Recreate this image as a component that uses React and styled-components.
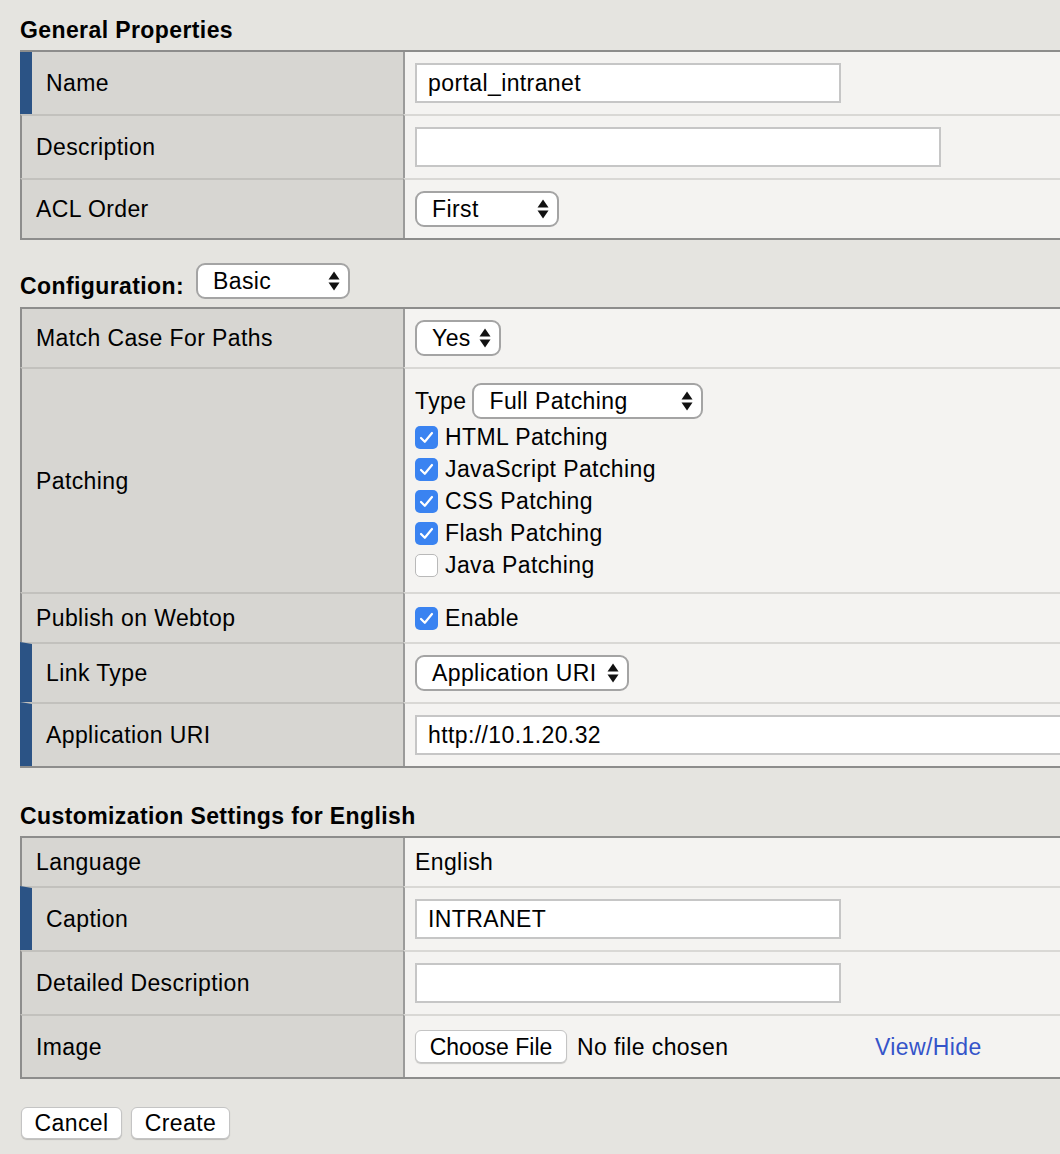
import React from 'react';
import styled, { createGlobalStyle } from 'styled-components';

const GlobalStyle = createGlobalStyle`
    html, body {
        margin: 0;
        padding: 0;
        background: #e5e4e0;
        overflow: hidden;
    }
    body {
        font-family: "Liberation Sans", Arial, Helvetica, sans-serif;
        font-size: 23px;
        letter-spacing: 0.4px;
        color: #000000;
    }
`

const Page = styled.div`
    width: 1060px;
    height: 1154px;
    overflow: hidden;
    box-sizing: border-box;
    padding: 17px 0 0 20px;
`
const SectionTitle = styled.h3`
    margin: ${({ $first }) => ($first ? '0' : '35px')} 0 7px;
    font-size: 23px;
    line-height: 26px;
    font-weight: bold;
`
const ConfigHeader = styled.div`
    display: flex;
    align-items: flex-end;
    gap: 12px;
    margin: 23px 0 8px;

    h3 {
        margin: 0;
        font-size: 23px;
        line-height: 26px;
        font-weight: bold;
    }
`
const Table = styled.div`
    width: 1100px;
    border-top: 2px solid #8d8d8c;
    border-bottom: 2px solid #8d8d8c;
`
const Row = styled.div`
    display: grid;
    grid-template-columns: 383px 1fr;

    & + & > div:first-child {
        border-top: 2px solid #c2c1bd;
    }
    & + & > div:last-child {
        border-top: 2px solid #d9d8d5;
    }
`
const Label = styled.div`
    box-sizing: border-box;
    display: flex;
    align-items: center;
    padding-left: 14px;
    background: #d7d6d2;
    border-left: ${({ $required }) => ($required ? '12px solid #2b5385' : '2px solid #8d8d8c')};
    line-height: 26px;
`
const Value = styled.div`
    box-sizing: border-box;
    padding: 11px 10px;
    background: #f4f3f1;
    border-left: 2px solid #9b9b9a;
    line-height: 26px;
    min-width: 0;
`
const TextInput = styled.input`
    display: block;
    box-sizing: border-box;
    width: ${({ $w }) => $w}px;
    height: 40px;
    margin: 0;
    padding: 0 11px;
    background: #ffffff;
    border: 2px solid #c6c6c6;
    border-radius: 0;
    font: inherit;
    letter-spacing: inherit;
    color: #000000;
    outline: none;
`
const SelectBox = styled.div`
    display: inline-flex;
    align-items: center;
    justify-content: space-between;
    box-sizing: border-box;
    width: ${({ $w }) => $w}px;
    height: 36px;
    padding: 0 8px 0 15px;
    background: #ffffff;
    border: 2px solid #a4a4a4;
    border-radius: 9px;
    vertical-align: middle;

    svg {
        flex-shrink: 0;
    }
`
const Line = styled.div`
    display: flex;
    align-items: center;
    height: ${({ $h }) => $h}px;
    gap: ${({ $gap }) => $gap ?? 7}px;
`
const Box = styled.span`
    display: inline-flex;
    align-items: center;
    justify-content: center;
    box-sizing: border-box;
    width: 23px;
    height: 23px;
    border-radius: 5px;
    background: ${({ $checked }) => ($checked ? '#3a83f1' : '#ffffff')};
    border: ${({ $checked }) => ($checked ? 'none' : '1px solid #b9b9b9')};
`
const PushButton = styled.button`
    box-sizing: border-box;
    width: ${({ $w }) => $w}px;
    height: ${({ $h }) => $h || 32}px;
    padding: 0;
    background: #ffffff;
    border: 1px solid #c4c4c4;
    border-radius: 6px;
    box-shadow: 0 1px 1px rgba(0, 0, 0, 0.18);
    font: inherit;
    letter-spacing: ${({ $tight }) => ($tight ? '0' : 'inherit')};
    color: #000000;
`
const FileField = styled.div`
    display: flex;
    align-items: center;
    gap: 10px;
    width: 460px;
`
const LinkText = styled.a`
    color: #3454c9;
    text-decoration: none;
`
const Actions = styled.div`
    display: flex;
    gap: 9px;
    margin-top: 28px;
    padding-left: 1px;
`

// macOS-style up/down select arrows
const Arrows = () => (
    <svg width="12" height="22" viewBox="0 0 12 22">
        <polygon points="6,1.5 11.5,9.5 0.5,9.5" fill="#111" />
        <polygon points="0.5,12.5 11.5,12.5 6,20.5" fill="#111" />
    </svg>
)

const Select = ({ w, children }) => (
    <SelectBox $w={w}>
        <span>{children}</span>
        <Arrows />
    </SelectBox>
)

const Checkbox = ({ checked, children }) => (
    <>
        <Box $checked={checked}>
            {checked && (
                <svg width="15" height="13" viewBox="0 0 15 13">
                    <path d="M2 7 L5.8 10.8 L13 2" fill="none" stroke="#fff" strokeWidth="2.2" strokeLinecap="round" strokeLinejoin="round" />
                </svg>
            )}
        </Box>
        <span>{children}</span>
    </>
)

const patchingOptions = [
    { label: 'HTML Patching', checked: true },
    { label: 'JavaScript Patching', checked: true },
    { label: 'CSS Patching', checked: true },
    { label: 'Flash Patching', checked: true },
    { label: 'Java Patching', checked: false },
]

const App = () => {
    return (
        <Page>
            <GlobalStyle />

            <SectionTitle $first>General Properties</SectionTitle>
            <Table>
                <Row>
                    <Label $required>Name</Label>
                    <Value><TextInput $w={426} defaultValue="portal_intranet" /></Value>
                </Row>
                <Row>
                    <Label>Description</Label>
                    <Value><TextInput $w={526} defaultValue="" /></Value>
                </Row>
                <Row>
                    <Label>ACL Order</Label>
                    <Value><Select w={144}>First</Select></Value>
                </Row>
            </Table>

            <ConfigHeader>
                <h3>Configuration:</h3>
                <Select w={154}>Basic</Select>
            </ConfigHeader>
            <Table>
                <Row>
                    <Label>Match Case For Paths</Label>
                    <Value><Select w={86}>Yes</Select></Value>
                </Row>
                <Row>
                    <Label>Patching</Label>
                    <Value>
                        <Line $h={41} $gap={6}>
                            <span>Type</span>
                            <Select w={231}>Full Patching</Select>
                        </Line>
                        {patchingOptions.map((opt) => (
                            <Line key={opt.label} $h={32}>
                                <Checkbox checked={opt.checked}>{opt.label}</Checkbox>
                            </Line>
                        ))}
                    </Value>
                </Row>
                <Row>
                    <Label>Publish on Webtop</Label>
                    <Value>
                        <Line $h={26}>
                            <Checkbox checked>Enable</Checkbox>
                        </Line>
                    </Value>
                </Row>
                <Row>
                    <Label $required>Link Type</Label>
                    <Value><Select w={214}>Application URI</Select></Value>
                </Row>
                <Row>
                    <Label $required>Application URI</Label>
                    <Value><TextInput $w={700} defaultValue="http://10.1.20.32" /></Value>
                </Row>
            </Table>

            <SectionTitle>Customization Settings for English</SectionTitle>
            <Table>
                <Row>
                    <Label>Language</Label>
                    <Value>English</Value>
                </Row>
                <Row>
                    <Label $required>Caption</Label>
                    <Value><TextInput $w={426} defaultValue="INTRANET" /></Value>
                </Row>
                <Row>
                    <Label>Detailed Description</Label>
                    <Value><TextInput $w={426} defaultValue="" /></Value>
                </Row>
                <Row>
                    <Label>Image</Label>
                    <Value>
                        <Line $h={39} $gap={0}>
                            <FileField>
                                <PushButton $w={152} $h={33} $tight>Choose File</PushButton>
                                <span>No file chosen</span>
                            </FileField>
                            <LinkText href="#">View/Hide</LinkText>
                        </Line>
                    </Value>
                </Row>
            </Table>

            <Actions>
                <PushButton $w={101}>Cancel</PushButton>
                <PushButton $w={99}>Create</PushButton>
            </Actions>
        </Page>
    )
}

export default App;
